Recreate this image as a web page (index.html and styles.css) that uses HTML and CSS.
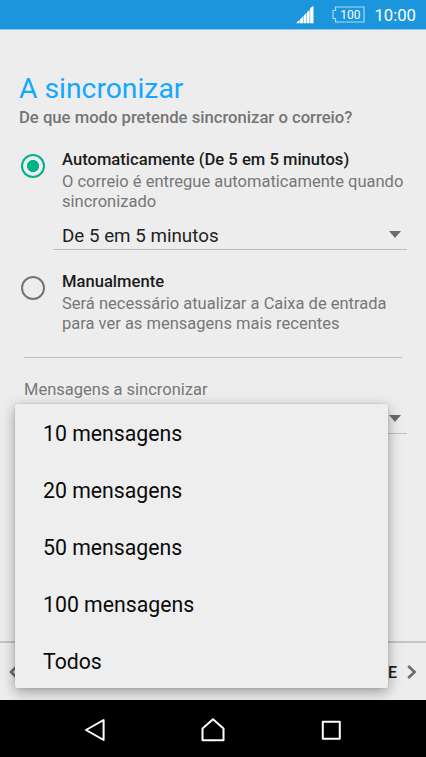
FILE: index.html
```
<!DOCTYPE html>
<html lang="pt">
<head>
  <meta charset="UTF-8">
  <meta name="viewport" content="width=device-width, initial-scale=1.0">
  <title>A sincronizar</title>
  <link rel="stylesheet" href="styles.css">
</head>
<body>
  <div class="screen">

    <!-- Status bar -->
    <header class="status-bar">
      <svg class="signal" width="18" height="18" viewBox="0 0 18 18" fill="#fff">
        <path d="M0 17.3L3.6 13.8V17.3zM4 17.3V13.4L7 10.4V17.3zM7.5 17.3V9.9L10.3 7.1V17.3zM10.8 17.3V6.6L13.6 3.7V17.3zM14.1 17.3V1.9L17.5 0V17.3z"/>
      </svg>
      <div class="battery">
        <svg width="33" height="17" viewBox="0 0 33 17" fill="none" stroke="#a9d9f6" stroke-width="1.2">
          <path d="M3.5 1H32V16H3.5V12.5H1V4.5H3.5z"/>
        </svg>
        <span class="battery-level">100</span>
      </div>
      <span class="clock">10:00</span>
    </header>

    <!-- Sync settings -->
    <main class="content">
      <h1>A sincronizar</h1>
      <p class="subtitle">De que modo pretende sincronizar o correio?</p>

      <div class="option">
        <span class="radio checked"></span>
        <div class="option-text">
          <h2>Automaticamente (De 5 em 5 minutos)</h2>
          <p>O correio é entregue automaticamente quando sincronizado</p>
        </div>
      </div>

      <div class="spinner">
        <span class="spinner-value">De 5 em 5 minutos</span>
        <span class="caret"></span>
      </div>

      <div class="option">
        <span class="radio"></span>
        <div class="option-text">
          <h2>Manualmente</h2>
          <p>Será necessário atualizar a Caixa de entrada para ver as mensagens mais recentes</p>
        </div>
      </div>

      <div class="divider"></div>

      <div class="amount">
        <p class="amount-label">Mensagens a sincronizar</p>
        <div class="spinner amount-spinner">
          <span class="caret"></span>
        </div>
        <ul class="popup">
          <li>10 mensagens</li>
          <li>20 mensagens</li>
          <li>50 mensagens</li>
          <li>100 mensagens</li>
          <li>Todos</li>
        </ul>
      </div>
    </main>

    <!-- Wizard buttons -->
    <footer class="wizard-bar">
      <svg width="10" height="14" viewBox="0 0 10 14" fill="none" stroke="#6c6c6c" stroke-width="2.6">
        <path d="M8.3 1L2 7L8.3 13"/>
      </svg>
      <div class="next">
        <span>E</span>
        <svg width="10" height="14" viewBox="0 0 10 14" fill="none" stroke="#6c6c6c" stroke-width="2.6">
          <path d="M1.2 1L7.6 7L1.2 13"/>
        </svg>
      </div>
    </footer>

    <!-- System navigation -->
    <nav class="nav-bar">
      <svg width="24" height="26" viewBox="0 0 24 26">
        <path d="M4 13L21.6 3V23z"/>
      </svg>
      <svg width="26" height="26" viewBox="0 0 26 26">
        <path d="M2.5 23.3V11.4L13 2.2L23.5 11.4V23.3z"/>
      </svg>
      <svg width="24" height="26" viewBox="0 0 24 26">
        <path d="M2.8 4.7H19.8V21.7H2.8z"/>
      </svg>
    </nav>
  </div>
</body>
</html>
```
FILE: styles.css
```
/* Reset default styles */
* {
  margin: 0;
  padding: 0;
  box-sizing: border-box;
  font-family: Roboto, "Noto Sans", sans-serif;
}

body {
  background: #ededed;
}

.screen {
  width: 426px;
  height: 757px;
  display: flex;
  flex-direction: column;
  overflow: hidden;
  background: #ededed;
}

/* Status bar */
.status-bar {
  height: 30px;
  flex-shrink: 0;
  display: flex;
  align-items: center;
  justify-content: flex-end;
  padding-right: 10px;
  background: #1b96dd;
  border-bottom: 1px solid #8cc6eb;
  color: #fff;
}

.signal {
  margin-right: 18px;
}

.battery {
  display: grid;
  margin-right: 9px;
}

.battery svg,
.battery-level {
  grid-area: 1 / 1;
}

.battery-level {
  padding-left: 3px;
  font-size: 12px;
  line-height: 18px;
  text-align: center;
}

.clock {
  font-size: 16.7px;
  line-height: 29px;
  padding-top: 2px;
}

/* Main content */
.content {
  flex: 1;
  padding: 42px 19px 0;
}

h1 {
  font-size: 28.3px;
  font-weight: 400;
  line-height: 34px;
  color: #12a8ff;
}

.subtitle {
  font-size: 16.65px;
  font-weight: 500;
  line-height: 20px;
  margin-top: 2px;
  color: #757575;
}

/* Radio options */
.option {
  display: flex;
  margin-top: 22px;
}

.radio {
  width: 24px;
  height: 24px;
  flex-shrink: 0;
  margin: 4px 17px 0 2px;
  border: 2px solid #757575;
  border-radius: 50%;
}

.radio.checked {
  border-color: #00b28c;
  background: radial-gradient(circle, #00b28c 5.7px, transparent 6.3px);
}

.option-text h2 {
  font-size: 16.6px;
  font-weight: 500;
  line-height: 20px;
  color: #1c1c1c;
}

.option-text p {
  margin-top: 2.4px;
  padding-bottom: 0.6px;
  font-size: 16.5px;
  line-height: 19.4px;
  color: #777;
}

/* Dropdown fields */
.spinner {
  height: 38px;
  margin-left: 34px;
  display: flex;
  align-items: center;
  justify-content: space-between;
  padding: 8px 6px 0 9px;
  border-bottom: 1px solid #bdbdbd;
}

.spinner-value {
  padding-top: 3px;
  font-size: 18.8px;
  line-height: 22px;
  color: #1f1f1f;
}

.caret {
  border: 6px solid transparent;
  border-top: 7px solid #6c6c6c;
  border-bottom: 0;
}

.divider {
  height: 1.5px;
  margin: 23px 5px 0;
  background: #c0c0c0;
}

.amount {
  position: relative;
  padding-top: 22px;
}

.amount-label {
  padding-left: 5px;
  font-size: 16.5px;
  line-height: 20px;
  color: #777;
}

.amount-spinner {
  height: 34px;
  justify-content: flex-end;
  padding-top: 4px;
}

/* Open list, drawn over the rest of the form */
.popup {
  position: absolute;
  left: -4px;
  top: 46px;
  width: 373px;
  height: 284px;
  z-index: 1;
  list-style: none;
  display: flex;
  flex-direction: column;
  padding-left: 28px;
  border-radius: 2px;
  background: #eee;
  box-shadow: 0 4px 14px rgba(0, 0, 0, 0.35), 0 0 2px rgba(0, 0, 0, 0.15);
}

.popup li {
  flex: 1;
  display: flex;
  align-items: center;
  padding-top: 3px;
  font-size: 21.25px;
  color: #0a0a0a;
}

/* Wizard buttons */
.wizard-bar {
  height: 59px;
  flex-shrink: 0;
  display: flex;
  align-items: center;
  justify-content: space-between;
  padding: 1px 9px 0 9px;
  border-top: 2px solid #c4c4c4;
}

.next {
  display: flex;
  align-items: center;
  gap: 10px;
  font-size: 16px;
  font-weight: 500;
  color: #1c1c1c;
}

/* System navigation */
.nav-bar {
  position: relative;
  z-index: 2;
  height: 57px;
  flex-shrink: 0;
  display: flex;
  align-items: center;
  justify-content: center;
  gap: 94px;
  padding-top: 3px;
  background: #000;
}

.nav-bar svg {
  fill: none;
  stroke: #fff;
  stroke-width: 2;
  stroke-linejoin: round;
}
```
